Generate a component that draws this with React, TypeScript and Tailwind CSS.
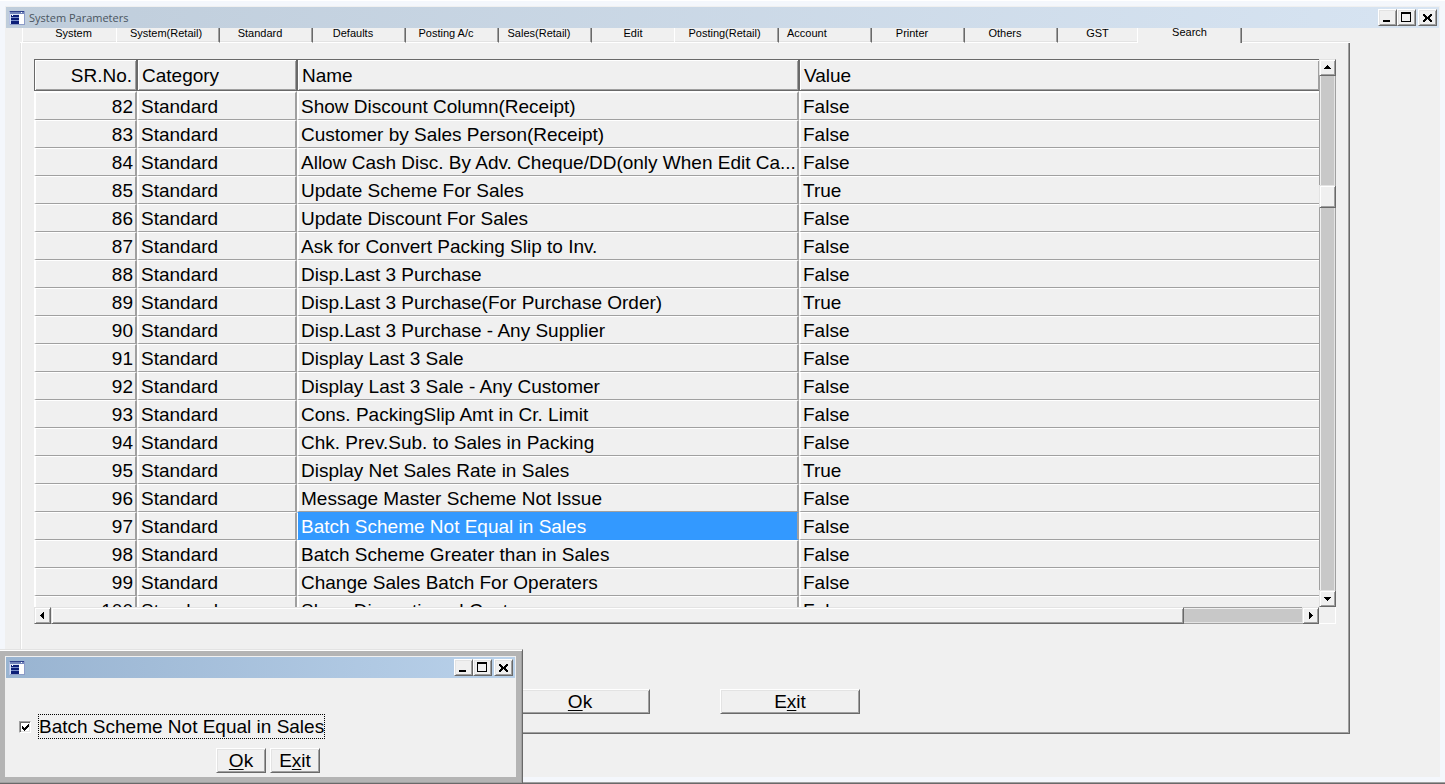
import { useState } from "react";
import type { ReactNode } from "react";

const raised =
  "border border-t-white border-l-white border-r-[#696969] border-b-[#696969] bg-[#f0f0f0] shadow-[inset_1px_1px_0_#e3e3e3,inset_-1px_-1px_0_#a0a0a0]";
const scrollPart =
  "border border-t-[#e3e3e3] border-l-[#e3e3e3] border-r-[#696969] border-b-[#696969] bg-[#f0f0f0] shadow-[inset_1px_1px_0_#ffffff,inset_-1px_-1px_0_#a0a0a0]";

const tabBottom = "border-b border-b-white";

type Edge = "left" | "right" | "both" | "none";

const tabs: { label: string; width: string; edge: Edge; align: string }[] = [
  { label: "System", width: "w-[94px]", edge: "left", align: "justify-center pl-2" },
  { label: "System(Retail)", width: "w-[104px]", edge: "both", align: "justify-center pr-1" },
  { label: "Standard", width: "w-[93px]", edge: "right", align: "justify-center pr-3" },
  { label: "Defaults", width: "w-[93px]", edge: "right", align: "justify-center pr-3" },
  { label: "Posting A/c", width: "w-[93px]", edge: "right", align: "justify-center pr-3" },
  { label: "Sales(Retail)", width: "w-[93px]", edge: "right", align: "justify-center pr-3" },
  { label: "Edit", width: "w-[82px]", edge: "none", align: "justify-center" },
  { label: "Posting(Retail)", width: "w-[105px]", edge: "both", align: "justify-center pr-1" },
  { label: "Account", width: "w-[93px]", edge: "right", align: "justify-start pl-2" },
  { label: "Printer", width: "w-[93px]", edge: "right", align: "justify-center pr-3" },
  { label: "Others", width: "w-[93px]", edge: "right", align: "justify-center pr-3" },
  { label: "GST", width: "w-[79px]", edge: "none", align: "justify-center" },
  { label: "Search", width: "w-[105px]", edge: "both", align: "justify-center" },
];

const edgeStyle: Record<Edge, string> = {
  left: "border-l border-l-white shadow-[inset_0_-1px_0_#e3e3e3]",
  right: "border-r border-r-[#696969] shadow-[inset_-1px_0_0_#a0a0a0,inset_0_-1px_0_#e3e3e3]",
  both: "border-l border-l-white border-r border-r-[#696969] shadow-[inset_-1px_0_0_#a0a0a0,inset_0_-1px_0_#e3e3e3]",
  none: "shadow-[inset_0_-1px_0_#e3e3e3]",
};

const rows: [number, string, string][] = [
  [82, "Show Discount Column(Receipt)", "False"],
  [83, "Customer by Sales Person(Receipt)", "False"],
  [84, "Allow Cash Disc. By Adv. Cheque/DD(only When Edit Ca...", "False"],
  [85, "Update Scheme For Sales", "True"],
  [86, "Update Discount For Sales", "False"],
  [87, "Ask for Convert Packing Slip to Inv.", "False"],
  [88, "Disp.Last 3 Purchase", "False"],
  [89, "Disp.Last 3 Purchase(For Purchase Order)", "True"],
  [90, "Disp.Last 3 Purchase - Any Supplier", "False"],
  [91, "Display Last 3 Sale", "False"],
  [92, "Display Last 3 Sale - Any Customer", "False"],
  [93, "Cons. PackingSlip Amt in Cr. Limit", "False"],
  [94, "Chk. Prev.Sub. to Sales in Packing", "False"],
  [95, "Display Net Sales Rate in Sales", "True"],
  [96, "Message Master Scheme Not Issue", "False"],
  [97, "Batch Scheme Not Equal in Sales", "False"],
  [98, "Batch Scheme Greater than in Sales", "False"],
  [99, "Change Sales Batch For Operaters", "False"],
  [100, "Show Discontinued Customer", "False"],
];

function AppIcon() {
  return (
    <svg width="16" height="14" viewBox="0 0 16 14" shapeRendering="crispEdges" aria-hidden="true">
      <rect width="16" height="14" fill="#8d9cc8" />
      <rect x="0" y="1" width="1" height="13" fill="#b8c4e4" />
      <rect x="1" y="0" width="14" height="1" fill="#2d3f8a" />
      <rect x="1" y="1" width="14" height="2" fill="#6f82ba" />
      <rect x="12" y="1" width="1" height="1" fill="#ffffff" />
      <rect x="1" y="3" width="9" height="10" fill="#dbe4f6" />
      <rect x="10" y="3" width="5" height="10" fill="#ffffff" />
      <rect x="2" y="4" width="8" height="8" fill="#7e92cc" />
      <rect x="2" y="4" width="8" height="2" fill="#0c1f78" />
      <rect x="2" y="7" width="8" height="2" fill="#0c1f78" />
      <rect x="2" y="10" width="8" height="3" fill="#0c1f78" />
      <rect x="3" y="4" width="1" height="1" fill="#ffffff" />
    </svg>
  );
}

function WindowButton({ label, children }: { label: string; children: ReactNode }) {
  return (
    <button type="button" aria-label={label} className={`h-[17px] w-[19px] ${raised}`}>
      <svg width="17" height="15" viewBox="0 0 17 15" shapeRendering="crispEdges" aria-hidden="true">
        {children}
      </svg>
    </button>
  );
}

function WindowButtons() {
  return (
    <div className="flex">
      <WindowButton label="Minimize">
        <rect x="4" y="10" width="7" height="2" />
      </WindowButton>
      <WindowButton label="Maximize">
        <path d="M3 2h10v10H3zM4 4v7h8V4z" fillRule="evenodd" />
      </WindowButton>
      <div className="ml-0.5 flex">
        <WindowButton label="Close">
          <path d="M4 4h2v1h-2zM11 4h2v1h-2zM4 5h3v1h-3zM10 5h3v1h-3zM5 6h3v1h-3zM9 6h3v1h-3zM6 7h5v2h-5zM5 9h3v1h-3zM9 9h3v1h-3zM4 10h3v1h-3zM10 10h3v1h-3zM4 11h2v1h-2zM11 11h2v1h-2z" />
        </WindowButton>
      </div>
    </div>
  );
}

function ArrowButton({ label, d }: { label: string; d: string }) {
  return (
    <button type="button" aria-label={label} className={`size-[17px] shrink-0 ${scrollPart}`}>
      <svg width="15" height="15" viewBox="0 0 15 15" shapeRendering="crispEdges" aria-hidden="true">
        <path d={d} />
      </svg>
    </button>
  );
}

function HeaderCell({ children, className = "" }: { children: ReactNode; className?: string }) {
  return (
    <th
      scope="col"
      className={`h-8 border-y border-l border-y-[#696969] border-l-[#696969] px-1 pt-[2px] font-normal shadow-[inset_1px_1px_0_#ffffff,inset_-1px_-1px_0_#a0a0a0] ${className}`}
    >
      {children}
    </th>
  );
}

function ParameterTable() {
  const [selected, setSelected] = useState(97);
  return (
    <table className="w-full table-fixed border-separate border-spacing-0 text-left text-[19px] leading-[24px] whitespace-nowrap">
      <colgroup>
        <col className="w-[103px]" />
        <col className="w-[160px]" />
        <col className="w-[502px]" />
        <col />
      </colgroup>
      <thead>
        <tr>
          <HeaderCell className="border-r border-r-[#696969] text-right">SR.No.</HeaderCell>
          <HeaderCell className="border-r border-r-[#696969]">Category</HeaderCell>
          <HeaderCell className="border-r border-r-[#696969]">Name</HeaderCell>
          <HeaderCell>Value</HeaderCell>
        </tr>
      </thead>
      <tbody>
        {rows.map(([no, name, value], i) => {
          const top = i === 0 ? "border-t-2 pt-[2px]" : "border-t pt-[2px]";
          const line = `${top} border-b border-b-[#a0a0a0] border-t-white border-l-2 border-l-white`;
          return (
            <tr key={no}>
              <td className={`${line} border-r-2 border-r-[#a0a0a0] pr-[2px] text-right`}>{no}</td>
              <td className={`${line} border-r-2 border-r-[#a0a0a0] pl-[2px]`}>Standard</td>
              <td
                onClick={() => setSelected(no)}
                className={
                  selected === no
                    ? `${top} overflow-hidden border-r-2 border-b border-l border-t-[#3399ff] border-r-[#a0a0a0] border-b-[#3399ff] border-l-white bg-[#3399ff] pl-[3px] text-white`
                    : `${line} overflow-hidden border-r-2 border-r-[#a0a0a0] pl-[2px]`
                }
              >
                {name}
              </td>
              <td className={`${line} pl-[2px]`}>{value}</td>
            </tr>
          );
        })}
      </tbody>
    </table>
  );
}

function OptionDialog() {
  const [checked, setChecked] = useState(true);
  return (
    <section
      role="dialog"
      aria-label="Batch Scheme Not Equal in Sales"
      className="absolute bottom-0 left-0 z-10 w-[523px] border-t border-r border-b border-t-[#e3e3e3] border-r-[#696969] border-b-[#696969] bg-[#b4b4b4] pt-[6px] pr-[6px] pb-[6px] pl-[5px] shadow-[inset_0_1px_0_#ffffff,inset_-1px_-1px_0_#a0a0a0]"
    >
      <div className="bg-[#f0f0f0] px-px pt-px">
        <header className="flex h-[21px] items-center justify-between bg-linear-to-r from-[#99b4d1] to-[#b9d1ea] pr-[2px] pl-[3px]">
          <AppIcon />
          <WindowButtons />
        </header>
        <div className="pt-9 pb-1 pl-[13px] text-[19px]">
          <div className="flex items-center gap-[7px]">
            <span className="grid size-3 place-items-center">
              <input
                id="batch-scheme"
                type="checkbox"
                checked={checked}
                onChange={(e) => setChecked(e.target.checked)}
                className="col-start-1 row-start-1 size-3 appearance-none border border-t-[#a0a0a0] border-r-white border-b-white border-l-[#a0a0a0] bg-white shadow-[inset_1px_1px_0_#696969,inset_-1px_-1px_0_#e3e3e3]"
              />
              {checked && (
                <svg
                  className="pointer-events-none col-start-1 row-start-1"
                  width="12"
                  height="12"
                  viewBox="0 0 12 12"
                  shapeRendering="crispEdges"
                  aria-hidden="true"
                >
                  <path d="M3 5h1v1h1v1h1v-1h1v-1h1v-1h1v-1h1v3h-1v1h-1v1h-1v1h-1v1h-1v-1h-1v-1h-1z" />
                </svg>
              )}
            </span>
            <label htmlFor="batch-scheme" className="border border-dotted border-black leading-[23px] whitespace-nowrap">
              Batch Scheme Not Equal in Sales
            </label>
          </div>
          <div className="mt-[9px] flex gap-1 pl-[197px] leading-[23px]">
            <button type="button" className={`w-[50px] ${raised}`}>
              <u className="underline-offset-2">O</u>k
            </button>
            <button type="button" className={`w-[50px] ${raised}`}>
              E<u className="underline-offset-2">x</u>it
            </button>
          </div>
        </div>
      </div>
    </section>
  );
}

export default function App() {
  return (
    <div className="relative flex h-screen min-h-[480px] flex-col overflow-hidden border-t border-t-white bg-[#f4f7fc] pt-[5px] pr-[5px] pb-[7px] pl-[5px] font-['Liberation_Sans',Arial,sans-serif] text-black shadow-[inset_0_-1px_0_#696969,inset_0_-2px_0_#a0a0a0]">
      <main className="flex min-h-0 flex-1 flex-col bg-[#f0f0f0] px-px pt-px">
        <header className="flex h-[21px] shrink-0 items-center justify-between bg-linear-to-r from-[#bfcddb] to-[#d7e4f2] pr-[2px] pl-[3px]">
          <div className="flex items-center gap-1">
            <AppIcon />
            <h1 className="font-['Open_Sans','Noto_Sans',sans-serif] text-[11px] leading-[21px] text-[#4a5560]">System Parameters</h1>
          </div>
          <WindowButtons />
        </header>

        <div className="mr-[89px] mb-[43px] ml-[14px] flex min-h-0 flex-1 flex-col">
          <div role="tablist" className="flex h-[15px] shrink-0 overflow-hidden text-[11px] leading-[12px] whitespace-nowrap">
            <span className={`w-[2px] shrink-0 ${tabBottom}`} />
            {tabs.map(({ label, width, edge, align }) => {
              const active = label === "Search";
              return (
                <button
                  key={label}
                  type="button"
                  role="tab"
                  aria-selected={active}
                  className={`flex shrink-0 items-end overflow-hidden ${width} ${align} ${
                    active
                      ? "border-r border-l border-r-[#696969] border-l-white pb-[5px] shadow-[inset_-1px_0_0_#a0a0a0]"
                      : `${tabBottom} ${edgeStyle[edge]} pb-[3px]`
                  }`}
                >
                  {label}
                </button>
              );
            })}
            <span className={`flex-1 ${tabBottom} shadow-[inset_0_-1px_0_#e3e3e3]`} />
          </div>

          <section className="flex min-h-0 flex-1 flex-col border-r border-b border-l border-r-[#696969] border-b-[#696969] border-l-[#e3e3e3] pt-4 pr-[13px] pb-[19px] pl-[13px] shadow-[inset_1px_0_0_#ffffff,inset_-1px_-1px_0_#a0a0a0]">
            <div className="grid min-h-0 flex-1 grid-cols-[minmax(0,1fr)_17px] grid-rows-[minmax(0,1fr)_17px]">
              <div className="overflow-hidden">
                <ParameterTable />
              </div>
              <div className="flex flex-col border-x border-x-[#a0a0a0] bg-[#c8c8c8] shadow-[inset_1px_0_0_#f0f0f0,inset_-1px_0_0_#e3e3e3]">
                <div className="-mx-px flex flex-1 flex-col">
                  <ArrowButton label="Scroll up" d="M7 5h1v1h1v1h1v1h1v1H4v-1h1v-1h1v-1h1z" />
                  <div className="grow-[109]" />
                  <div className={`h-[23px] ${scrollPart}`} />
                  <div className="grow-[382]" />
                  <ArrowButton label="Scroll down" d="M4 6h7v1h-1v1h-1v1h-1v1h-1v-1h-1v-1h-1v-1h-1z" />
                </div>
              </div>
              <div className="flex border-y border-y-[#a0a0a0] bg-[#c8c8c8] shadow-[inset_0_1px_0_#f0f0f0,inset_0_-1px_0_#e3e3e3]">
                <div className="-my-px flex flex-1">
                  <ArrowButton label="Scroll left" d="M9 4v7h-1v-1h-1v-1h-1v-1h-1v-1h1v-1h1v-1h1v-1z" />
                  <div className={`grow-[1133] ${scrollPart}`} />
                  <div className="grow-[118]" />
                  <ArrowButton label="Scroll right" d="M6 4v7h1v-1h1v-1h1v-1h1v-1h-1v-1h-1v-1h-1v-1z" />
                </div>
              </div>
              <div className="border-r border-b border-white" />
            </div>
            <div className="mt-[65px] flex justify-center gap-[70px] text-[19px] leading-[23px]">
              <button type="button" className={`w-[140px] ${raised}`}>
                <u className="underline-offset-2">O</u>k
              </button>
              <button type="button" className={`w-[140px] ${raised}`}>
                E<u className="underline-offset-2">x</u>it
              </button>
            </div>
          </section>
        </div>
      </main>
      <OptionDialog />
    </div>
  );
}
